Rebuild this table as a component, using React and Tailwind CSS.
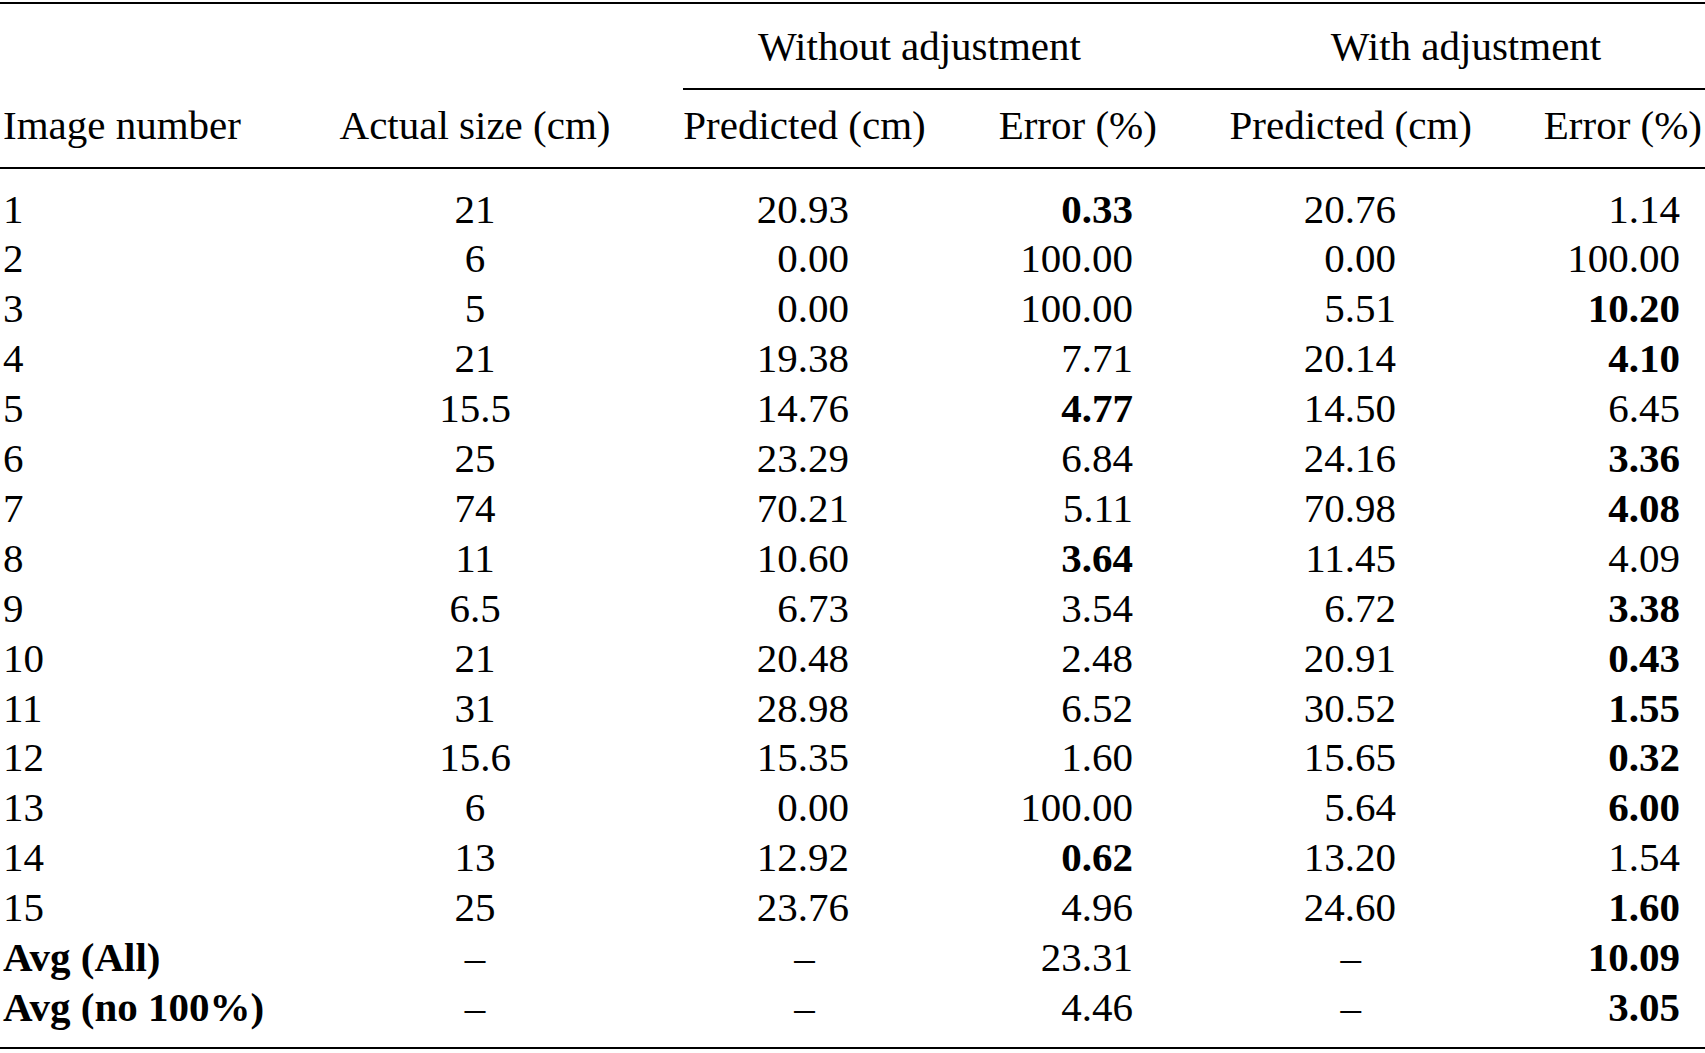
import React from "react";

const rows = [
  ["1", "21", "20.93", ["0.33", true], "20.76", ["1.14", false]],
  ["2", "6", "0.00", ["100.00", false], "0.00", ["100.00", false]],
  ["3", "5", "0.00", ["100.00", false], "5.51", ["10.20", true]],
  ["4", "21", "19.38", ["7.71", false], "20.14", ["4.10", true]],
  ["5", "15.5", "14.76", ["4.77", true], "14.50", ["6.45", false]],
  ["6", "25", "23.29", ["6.84", false], "24.16", ["3.36", true]],
  ["7", "74", "70.21", ["5.11", false], "70.98", ["4.08", true]],
  ["8", "11", "10.60", ["3.64", true], "11.45", ["4.09", false]],
  ["9", "6.5", "6.73", ["3.54", false], "6.72", ["3.38", true]],
  ["10", "21", "20.48", ["2.48", false], "20.91", ["0.43", true]],
  ["11", "31", "28.98", ["6.52", false], "30.52", ["1.55", true]],
  ["12", "15.6", "15.35", ["1.60", false], "15.65", ["0.32", true]],
  ["13", "6", "0.00", ["100.00", false], "5.64", ["6.00", true]],
  ["14", "13", "12.92", ["0.62", true], "13.20", ["1.54", false]],
  ["15", "25", "23.76", ["4.96", false], "24.60", ["1.60", true]],
];

const avgs = [
  ["Avg (All)", "23.31", "10.09"],
  ["Avg (no 100%)", "4.46", "3.05"],
];

const grid = "grid grid-cols-[303.5px_343px_316px_230.5px_315.5px_196.5px]";

export default function App() {
  return (
    <div
      className="w-[1705px] h-[1053px] bg-white text-black overflow-hidden"
      style={{ fontFamily: '"Liberation Serif", "Times New Roman", serif' }}
    >
      <div className="text-[41px]">
        {/* top rule */}
        <div className="mt-[2px] h-[2px] bg-black" />

        {/* spanner row */}
        <div className={`${grid} pt-[17px] pb-[17px] leading-[50px]`}>
          <div />
          <div />
          <div className="col-span-2 pl-[36.5px] pr-[37px] text-center">Without adjustment</div>
          <div className="col-span-2 pl-[37px] pr-[3px] text-center">With adjustment</div>
        </div>

        {/* cmidrule */}
        <div className="ml-[683px] h-[2px] bg-black" />

        {/* column header row */}
        <div className={`${grid} pt-[10px] pb-[17px] leading-[50px]`}>
          <div className="pl-[3px]">Image number</div>
          <div className="text-center">Actual size (cm)</div>
          <div className="text-center">Predicted (cm)</div>
          <div className="text-center">Error (%)</div>
          <div className="text-center">Predicted (cm)</div>
          <div className="text-right pr-[3px]">Error (%)</div>
        </div>

        {/* header rule */}
        <div className="h-[2px] bg-black" />

        {/* body */}
        <div className="pt-[15.5px] pb-[14px] leading-[49.9px]">
          {rows.map((r) => (
            <div key={r[0]} className={grid}>
              <div className="pl-[3px]">{r[0]}</div>
              <div className="text-center">{r[1]}</div>
              <div className="text-right pr-[113.5px]">{r[2]}</div>
              <div className={`text-right pr-[60px] ${r[3][1] ? "font-bold" : ""}`}>{r[3][0]}</div>
              <div className="text-right pr-[112.5px]">{r[4]}</div>
              <div className={`text-right pr-[25px] ${r[5][1] ? "font-bold" : ""}`}>{r[5][0]}</div>
            </div>
          ))}
          {avgs.map((a) => (
            <div key={a[0]} className={grid}>
              <div className="pl-[3px] font-bold">{a[0]}</div>
              <div className="text-center">–</div>
              <div className="text-center">–</div>
              <div className="text-right pr-[60px]">{a[1]}</div>
              <div className="text-center">–</div>
              <div className="text-right pr-[25px] font-bold">{a[2]}</div>
            </div>
          ))}
        </div>

        {/* bottom rule */}
        <div className="h-[2.5px] bg-black" />
      </div>
    </div>
  );
}
